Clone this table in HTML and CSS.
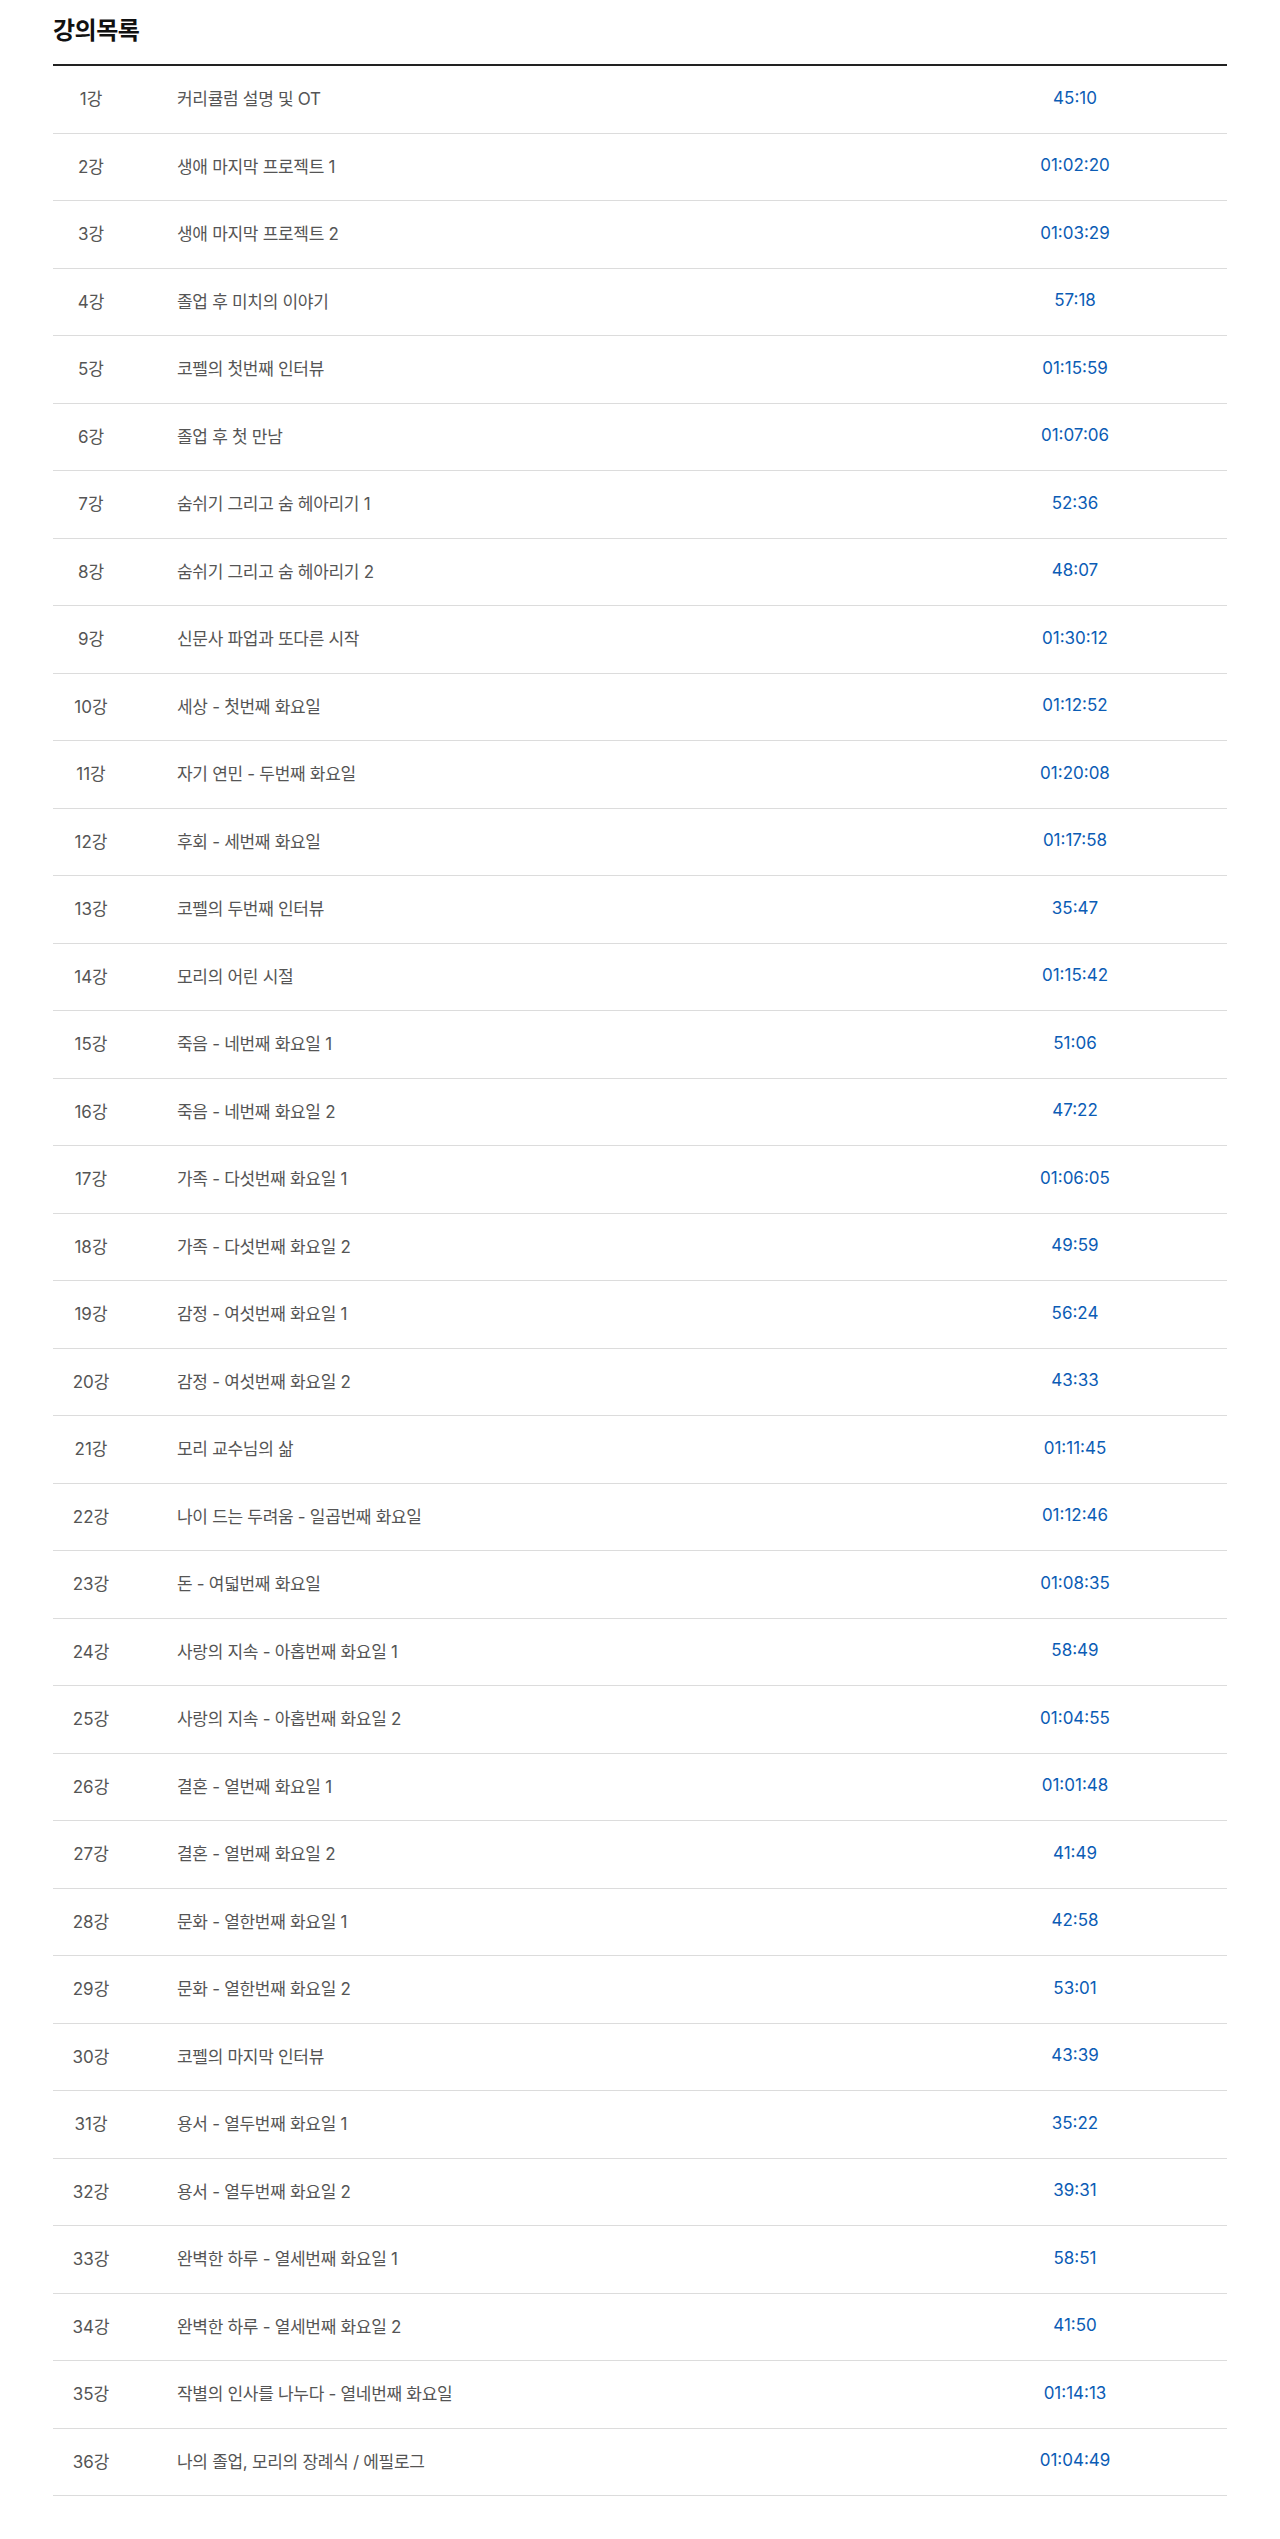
FILE: index.html
```html
<!DOCTYPE html>
<html lang="ko">
<head>
    <meta charset="UTF-8">
    <meta name="viewport" content="width=device-width, initial-scale=1.0">
    <title>강의목록</title>
    <link rel="stylesheet" href="styles.css">
</head>
<body>
    <div class="container">
        <h2 class="section-title">강의목록</h2>
        <ul class="lecture-list">
            <li><span class="num">1강</span><span class="name">커리큘럼 설명 및 OT</span><span class="time">45:10</span></li>
            <li><span class="num">2강</span><span class="name">생애 마지막 프로젝트 1</span><span class="time">01:02:20</span></li>
            <li><span class="num">3강</span><span class="name">생애 마지막 프로젝트 2</span><span class="time">01:03:29</span></li>
            <li><span class="num">4강</span><span class="name">졸업 후 미치의 이야기</span><span class="time">57:18</span></li>
            <li><span class="num">5강</span><span class="name">코펠의 첫번째 인터뷰</span><span class="time">01:15:59</span></li>
            <li><span class="num">6강</span><span class="name">졸업 후 첫 만남</span><span class="time">01:07:06</span></li>
            <li><span class="num">7강</span><span class="name">숨쉬기 그리고 숨 헤아리기 1</span><span class="time">52:36</span></li>
            <li><span class="num">8강</span><span class="name">숨쉬기 그리고 숨 헤아리기 2</span><span class="time">48:07</span></li>
            <li><span class="num">9강</span><span class="name">신문사 파업과 또다른 시작</span><span class="time">01:30:12</span></li>
            <li><span class="num">10강</span><span class="name">세상 - 첫번째 화요일</span><span class="time">01:12:52</span></li>
            <li><span class="num">11강</span><span class="name">자기 연민 - 두번째 화요일</span><span class="time">01:20:08</span></li>
            <li><span class="num">12강</span><span class="name">후회 - 세번째 화요일</span><span class="time">01:17:58</span></li>
            <li><span class="num">13강</span><span class="name">코펠의 두번째 인터뷰</span><span class="time">35:47</span></li>
            <li><span class="num">14강</span><span class="name">모리의 어린 시절</span><span class="time">01:15:42</span></li>
            <li><span class="num">15강</span><span class="name">죽음 - 네번째 화요일 1</span><span class="time">51:06</span></li>
            <li><span class="num">16강</span><span class="name">죽음 - 네번째 화요일 2</span><span class="time">47:22</span></li>
            <li><span class="num">17강</span><span class="name">가족 - 다섯번째 화요일 1</span><span class="time">01:06:05</span></li>
            <li><span class="num">18강</span><span class="name">가족 - 다섯번째 화요일 2</span><span class="time">49:59</span></li>
            <li><span class="num">19강</span><span class="name">감정 - 여섯번째 화요일 1</span><span class="time">56:24</span></li>
            <li><span class="num">20강</span><span class="name">감정 - 여섯번째 화요일 2</span><span class="time">43:33</span></li>
            <li><span class="num">21강</span><span class="name">모리 교수님의 삶</span><span class="time">01:11:45</span></li>
            <li><span class="num">22강</span><span class="name">나이 드는 두려움 - 일곱번째 화요일</span><span class="time">01:12:46</span></li>
            <li><span class="num">23강</span><span class="name">돈 - 여덟번째 화요일</span><span class="time">01:08:35</span></li>
            <li><span class="num">24강</span><span class="name">사랑의 지속 - 아홉번째 화요일 1</span><span class="time">58:49</span></li>
            <li><span class="num">25강</span><span class="name">사랑의 지속 - 아홉번째 화요일 2</span><span class="time">01:04:55</span></li>
            <li><span class="num">26강</span><span class="name">결혼 - 열번째 화요일 1</span><span class="time">01:01:48</span></li>
            <li><span class="num">27강</span><span class="name">결혼 - 열번째 화요일 2</span><span class="time">41:49</span></li>
            <li><span class="num">28강</span><span class="name">문화 - 열한번째 화요일 1</span><span class="time">42:58</span></li>
            <li><span class="num">29강</span><span class="name">문화 - 열한번째 화요일 2</span><span class="time">53:01</span></li>
            <li><span class="num">30강</span><span class="name">코펠의 마지막 인터뷰</span><span class="time">43:39</span></li>
            <li><span class="num">31강</span><span class="name">용서 - 열두번째 화요일 1</span><span class="time">35:22</span></li>
            <li><span class="num">32강</span><span class="name">용서 - 열두번째 화요일 2</span><span class="time">39:31</span></li>
            <li><span class="num">33강</span><span class="name">완벽한 하루 - 열세번째 화요일 1</span><span class="time">58:51</span></li>
            <li><span class="num">34강</span><span class="name">완벽한 하루 - 열세번째 화요일 2</span><span class="time">41:50</span></li>
            <li><span class="num">35강</span><span class="name">작별의 인사를 나누다 - 열네번째 화요일</span><span class="time">01:14:13</span></li>
            <li><span class="num">36강</span><span class="name">나의 졸업, 모리의 장례식 / 에필로그</span><span class="time">01:04:49</span></li>
        </ul>
    </div>
</body>
</html>
```

FILE: styles.css
```css
body {
    font-family: "Inter", "Noto Sans CJK KR", sans-serif;
    background-color: #fff;
    color: #555;
    margin: 0;
    padding: 0;
}

.container {
    padding: 0 53px;
}

.section-title {
    margin: 0;
    padding: 14px 0 16px;
    font-size: 24px;
    line-height: 34px;
    font-weight: bold;
    color: #111;
    letter-spacing: -0.5px;
}

.lecture-list {
    list-style-type: none;
    margin: 0;
    padding: 0;
    border-top: 2px solid #222;
}

.lecture-list li {
    display: grid;
    grid-template-columns: 76px 1fr 304px;
    align-items: center;
    height: 67.5px;
    box-sizing: border-box;
    padding-bottom: 3px;
    border-bottom: 1px solid #dcdcdc;
    font-size: 17px;
}

.num {
    text-align: center;
}

.name {
    padding-left: 48px;
    letter-spacing: -0.3px;
}

.time {
    text-align: center;
    color: #0b5cb5;
}
```
